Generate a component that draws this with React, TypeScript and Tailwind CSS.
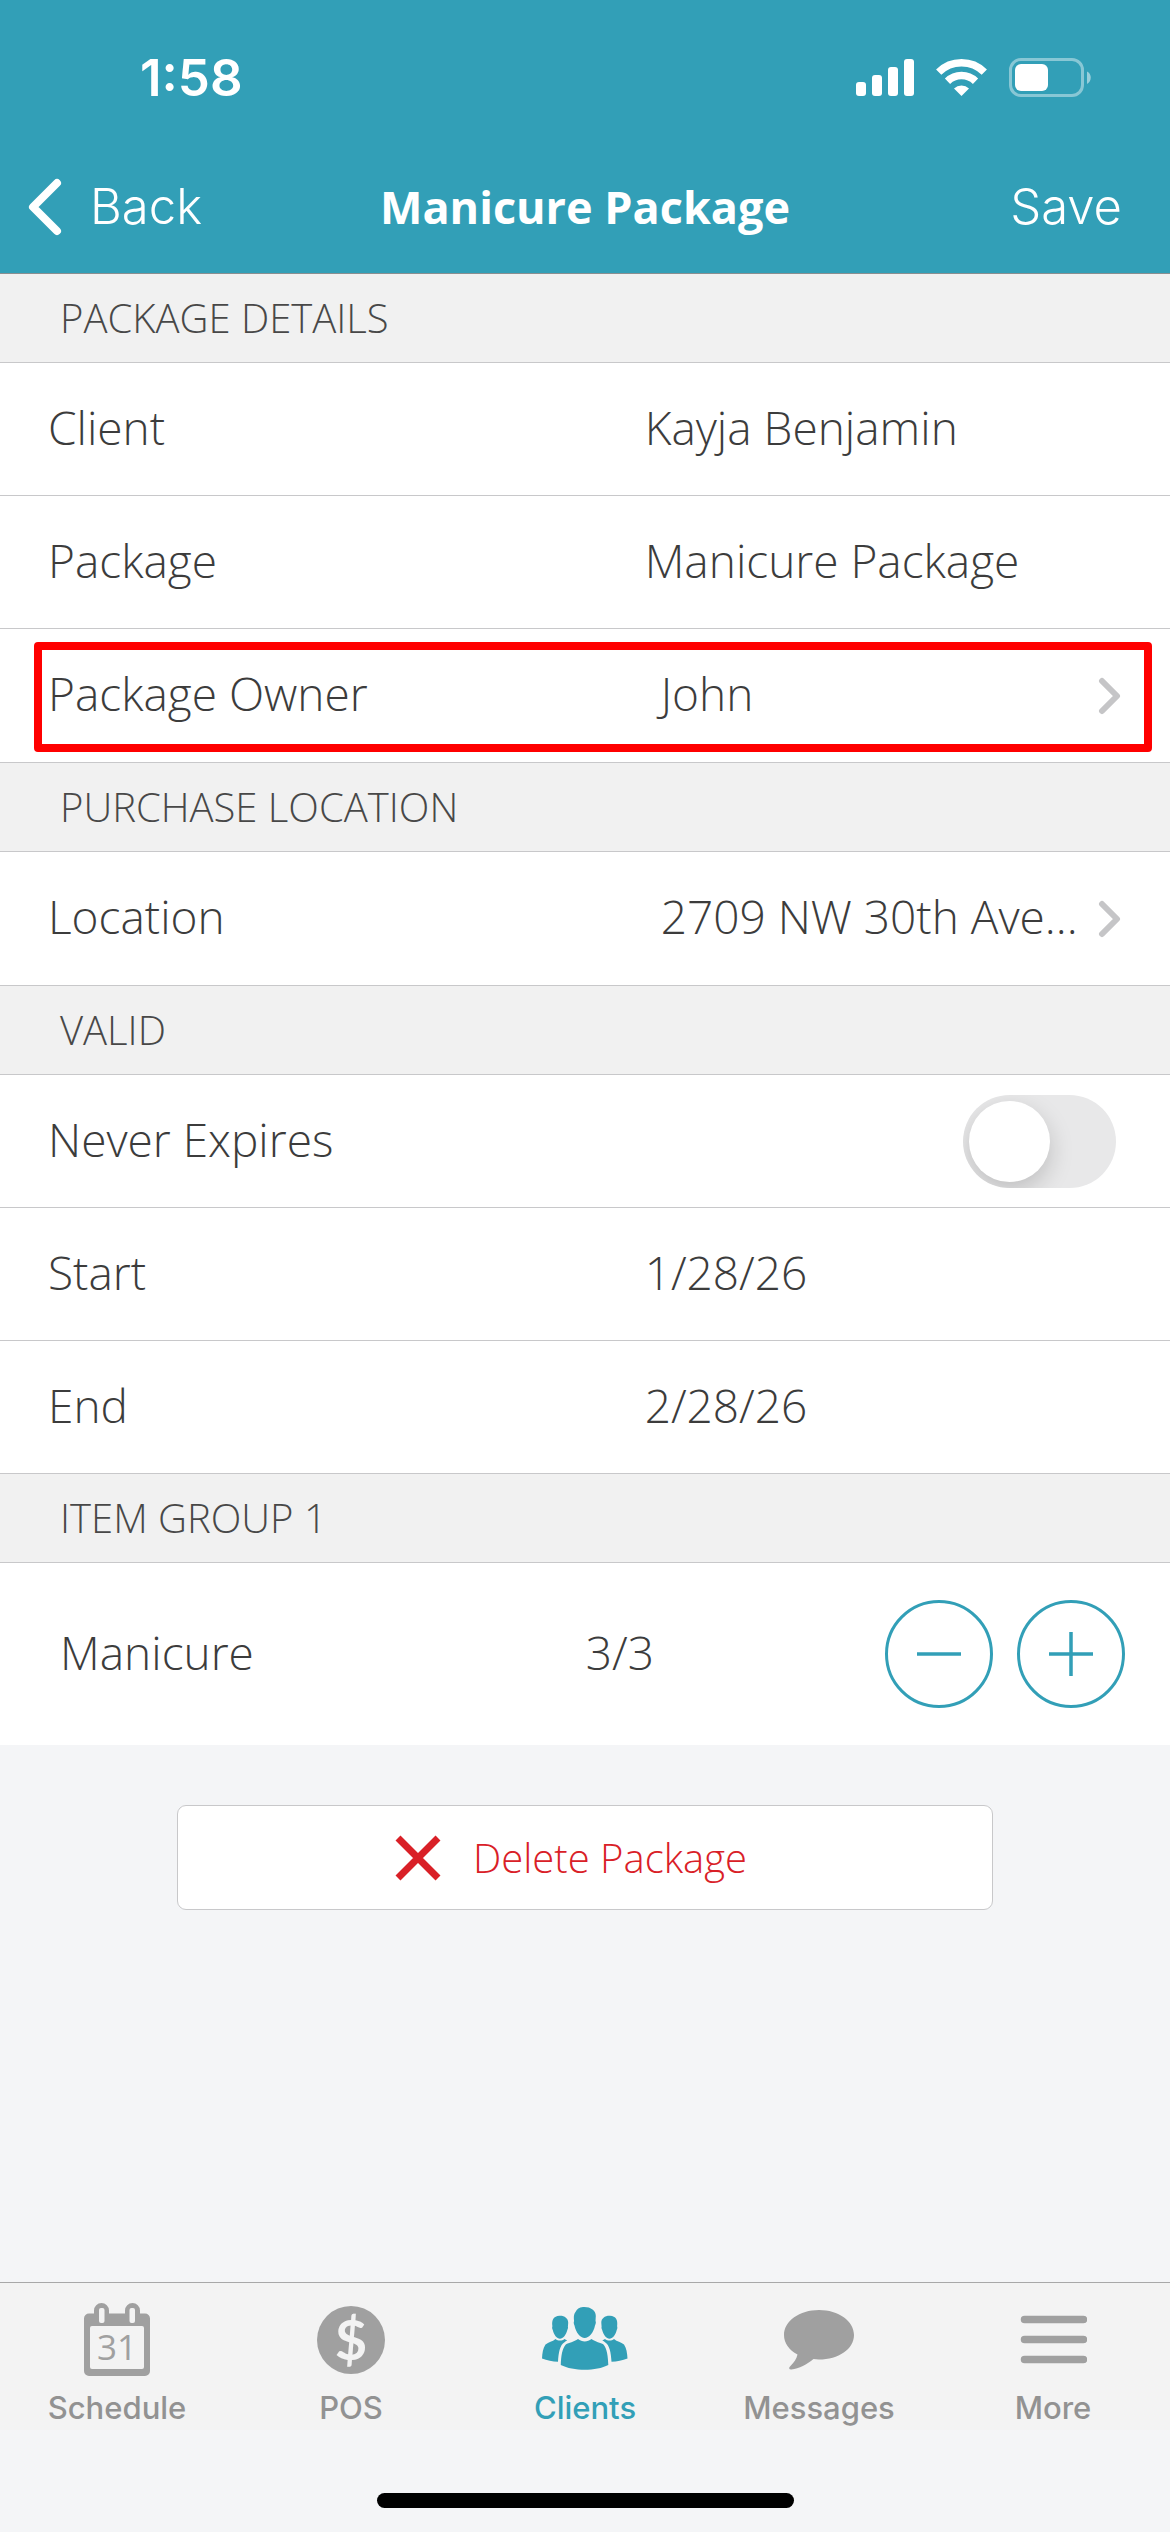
import { useState, type ReactNode } from "react";

const tabs = [
  { name: "Schedule", icon: CalendarIcon },
  { name: "POS", icon: DollarIcon },
  { name: "Clients", icon: ClientsIcon },
  { name: "Messages", icon: ChatIcon },
  { name: "More", icon: MenuIcon },
];

export default function App() {
  const [neverExpires, setNeverExpires] = useState(false);
  const [count, setCount] = useState(3);

  return (
    <div className="flex min-h-screen flex-col bg-[#f4f5f7] font-['Open_Sans',sans-serif] text-[#3c3c3c]">
      <header className="border-b border-[#8a8f91] bg-[#329fb7] pb-[15px] text-white">
        <StatusBar />
        <nav className="grid h-[102px] grid-cols-[1fr_auto_1fr] items-center px-7">
          <button className="flex items-center gap-7 justify-self-start font-[Inter,sans-serif] text-[49px] font-[350]">
            <svg width="34" height="58" viewBox="0 0 34 58" fill="none" stroke="currentColor" strokeWidth="8" strokeLinecap="round" strokeLinejoin="round">
              <path d="M29 5 5 29l24 24" />
            </svg>
            Back
          </button>
          <h1 className="text-[45px] font-bold">Manicure Package</h1>
          <button className="justify-self-end pr-5 font-[Inter,sans-serif] text-[49px] font-[350]">Save</button>
        </nav>
      </header>

      <main>
        <SectionTitle>PACKAGE DETAILS</SectionTitle>
        <Row label="Client">Kayja Benjamin</Row>
        <Row label="Package">Manicure Package</Row>
        <div className="relative">
          <LinkRow label="Package Owner">John</LinkRow>
          <div className="pointer-events-none absolute top-[13px] right-[18px] bottom-[11px] left-[34px] rounded-[4px] border-8 border-[#ff0000]" />
        </div>

        <SectionTitle>PURCHASE LOCATION</SectionTitle>
        <LinkRow label="Location">2709 NW 30th Ave...</LinkRow>

        <SectionTitle>VALID</SectionTitle>
        <div className="flex h-[133px] items-center justify-between border-b border-[#c8c8ca] bg-white pr-[54px] pl-12">
          <label htmlFor="never-expires" className="pb-1 text-[46px] font-light">
            Never Expires
          </label>
          <input
            id="never-expires"
            type="checkbox"
            role="switch"
            checked={neverExpires}
            onChange={(e) => setNeverExpires(e.target.checked)}
            className="h-[93px] w-[153px] appearance-none overflow-hidden rounded-full bg-[#e8e8e9] p-[6px] before:block before:size-[81px] before:rounded-full before:bg-white before:shadow-[0_9px_24px_rgba(0,0,0,0.18)] before:transition-transform checked:bg-[#329fb7] checked:before:translate-x-[60px]"
          />
        </div>
        <Row label="Start">1/28/26</Row>
        <Row label="End">2/28/26</Row>

        <SectionTitle>ITEM GROUP 1</SectionTitle>
        <div className="flex h-[182px] items-center bg-white pr-[45px] pl-[60px] text-[46px] font-light">
          <span className="w-[49%] pb-1">Manicure</span>
          <span className="pb-1 pl-1">{count}/3</span>
          <div className="ml-auto flex gap-6 text-[#329fb7]">
            <StepButton label="Use one" path="M32 54h44" onClick={() => setCount(Math.max(0, count - 1))} />
            <StepButton label="Restore one" path="M32 54h44M54 32v44" onClick={() => setCount(Math.min(3, count + 1))} />
          </div>
        </div>

        <button className="mx-auto mt-[60px] flex h-[105px] w-[816px] max-w-full items-center justify-center gap-8 rounded-[9px] border border-[#c8c8ca] bg-white pr-7 text-[40px] font-light text-[#d92027]">
          <svg width="46" height="46" viewBox="0 0 46 46" fill="none" stroke="currentColor" strokeWidth="7">
            <path d="m3 3 40 40M43 3 3 43" />
          </svg>
          Delete Package
        </button>
      </main>

      <footer className="mt-auto">
        <nav className="grid h-[148px] grid-cols-5 border-t border-[#a8a8a8] bg-[#f3f3f3]">
          {tabs.map(({ name, icon: Icon }) => (
            <a key={name} href="#" className={name === "Clients" ? "flex flex-col items-center pt-5 text-[#329fb7]" : "flex flex-col items-center pt-5 text-[#a0a0a0]"}>
              <Icon />
              <span className={name === "Clients" ? "mt-[11px] font-[Inter,sans-serif] text-[31px] leading-9 font-medium" : "mt-[11px] font-[Inter,sans-serif] text-[31px] leading-9 font-medium text-[#929292]"}>{name}</span>
            </a>
          ))}
        </nav>
        <div className="flex h-[102px] items-end justify-center pb-6">
          <div className="h-[15px] w-[417px] rounded-full bg-black" />
        </div>
      </footer>
    </div>
  );
}

function StatusBar() {
  return (
    <div className="flex h-[156px] items-center justify-between pr-[78px] pl-[140px]">
      <span className="font-[Inter,sans-serif] text-[51px] font-semibold">1:58</span>
      <div className="flex items-center gap-[22px]">
        <svg width="58" height="38" viewBox="0 0 58 38" fill="currentColor">
          <rect x="0" y="23" width="10" height="14" rx="3" />
          <rect x="16" y="16" width="10" height="21" rx="3" />
          <rect x="32" y="8" width="10" height="29" rx="3" />
          <rect x="48" y="0" width="10" height="37" rx="3" />
        </svg>
        <svg width="51" height="38" viewBox="0 0 51 38" fill="none" stroke="currentColor" strokeWidth="7.5">
          <path d="M2.7 13.2a32.5 32.5 0 0 1 45.6 0" />
          <path d="M11.5 22.2a20 20 0 0 1 28 0" />
          <path d="M18 29.5a11 11 0 0 1 15 0L25.5 37Z" fill="currentColor" stroke="none" />
        </svg>
        <svg width="83" height="40" viewBox="0 0 83 40" fill="none">
          <rect x="1.5" y="1.5" width="72" height="36" rx="10.5" stroke="white" strokeOpacity="0.42" strokeWidth="3" />
          <rect x="6" y="6" width="33" height="27" rx="6" fill="white" />
          <path d="M78 13.5c5 2.2 5 10 0 12.5Z" fill="white" fillOpacity="0.5" />
        </svg>
      </div>
    </div>
  );
}

function SectionTitle({ children }: { children: ReactNode }) {
  return <h2 className="flex h-[89px] items-center border-b border-[#c8c8ca] bg-[#f1f1f1] px-[60px] text-[40px] font-light text-[#484848]">{children}</h2>;
}

function Row({ label, children }: { label: string; children: ReactNode }) {
  return (
    <div className="grid h-[133px] grid-cols-[5fr_4fr] items-center border-b border-[#c8c8ca] bg-white px-12 pb-1 text-[46px] font-light">
      <span>{label}</span>
      <span>{children}</span>
    </div>
  );
}

function LinkRow({ label, children }: { label: string; children: ReactNode }) {
  return (
    <button className="grid h-[134px] w-full grid-cols-[5fr_4fr] items-center border-b border-[#c8c8ca] bg-white px-12 text-left text-[46px] font-light">
      <span className="pb-1">{label}</span>
      <span className="flex min-w-0 items-center justify-between pl-4">
        <span className="pb-1 whitespace-nowrap">{children}</span>
        <svg width="24" height="38" viewBox="0 0 24 38" fill="none" stroke="#c5c5c7" strokeWidth="6" strokeLinecap="round" strokeLinejoin="round">
          <path d="m4 4 15 15L4 34" />
        </svg>
      </span>
    </button>
  );
}

function StepButton({ label, path, onClick }: { label: string; path: string; onClick: () => void }) {
  return (
    <button aria-label={label} onClick={onClick}>
      <svg width="108" height="108" viewBox="0 0 108 108" fill="none" stroke="currentColor" strokeWidth="3">
        <circle cx="54" cy="54" r="52.5" />
        <path d={path} strokeWidth="3.5" />
      </svg>
    </button>
  );
}

function CalendarIcon() {
  return (
    <svg width="66" height="76" viewBox="0 0 66 76" fill="currentColor">
      <path d="M5 10.5h5V7.5a7.5 7.5 0 0 1 15 0v3h16V7.5a7.5 7.5 0 0 1 15 0v3h5a5 5 0 0 1 5 5V68a5 5 0 0 1-5 5H5a5 5 0 0 1-5-5V15.5a5 5 0 0 1 5-5Z" />
      <rect x="15" y="5" width="5.5" height="15" rx="2" fill="#f3f3f3" />
      <rect x="45.5" y="5" width="5.5" height="15" rx="2" fill="#f3f3f3" />
      <rect x="6" y="23" width="54" height="43" rx="2" fill="#f3f3f3" />
      <text x="33" y="57" textAnchor="middle" className="font-['Open_Sans',sans-serif] text-[35px] font-normal">
        31
      </text>
    </svg>
  );
}

function DollarIcon() {
  return (
    <svg width="68" height="76" viewBox="0 0 68 76" fill="currentColor">
      <circle cx="34" cy="37" r="34" />
      <text x="34" y="57" textAnchor="middle" fill="#f3f3f3" className="font-[Lato,sans-serif] text-[56px] font-bold">
        $
      </text>
    </svg>
  );
}

function ClientsIcon() {
  return (
    <svg width="86" height="76" viewBox="0 0 86 76" fill="currentColor">
      <g transform="translate(0 4)">
        <path d="M41 0c7-.5 13 3 12.800 9l-.3 5c.8 1 .2 3-.5 4.500C51.500 26 47 31 42.700 31S34 26 32.500 18.500c-.8-1.500-1-3.500-.4-4.500-.6-5-.1-7 1.400-9C35 2 37 .3 41 0Z" />
        <path d="M36 32c4 3.200 9.500 3.200 13.500 0 4 3 9 3.500 12 5.500 3.500 4 4.500 12 4.800 20.500-12 6.300-35 6.300-47.500 0 .3-8.500 1.300-16.500 5-20.500 3-2 8.200-2.500 12.200-5.500Z" />
        <path id="side-head" d="M17.500 8.700c5-.2 8.800 2.500 8.700 7l-.3 4c.3.8 0 2-.5 3-1.200 5-4.400 9-7.400 9s-6.300-4-7.300-9c-.6-1-.7-2.500-.3-3.500C9.500 13 11.500 9 17.500 8.700Z" />
        <path id="side-body" d="M13.500 32c2.500 2 6.500 2 9 0l2.700 1.500c-1.200.7-2 1-2.700 1.700-4.500 2.500-6 10.500-6.500 19.500-5.500-.2-11-1.200-16-3.200.3-5.500 1-10.500 3.500-14 3-2.500 7-2.700 10-5.500Z" />
        <use href="#side-head" transform="matrix(-1 0 0 1 85.500 0)" />
        <use href="#side-body" transform="matrix(-1 0 0 1 85.500 0)" />
      </g>
    </svg>
  );
}

function ChatIcon() {
  return (
    <svg width="70" height="76" viewBox="0 0 70 76" fill="currentColor">
      <path d="M35 7c19.500 0 35 11 35 25S54.500 56.500 35 56.500c-2 0-4-.1-5.500-.4C23 61.500 15 66 7.500 66.500c-2.500.2-3-1.500-1.500-3 4-4 6.500-7.500 7.500-12C5 47 0 40 0 32 0 18 15.500 7 35 7Z" />
    </svg>
  );
}

function MenuIcon() {
  return (
    <svg width="68" height="76" viewBox="0 0 68 76" fill="none" stroke="currentColor" strokeWidth="7.5" strokeLinecap="round">
      <path d="M5.5 16.5h59M5.5 36.5h59M5.5 56.5h59" />
    </svg>
  );
}
